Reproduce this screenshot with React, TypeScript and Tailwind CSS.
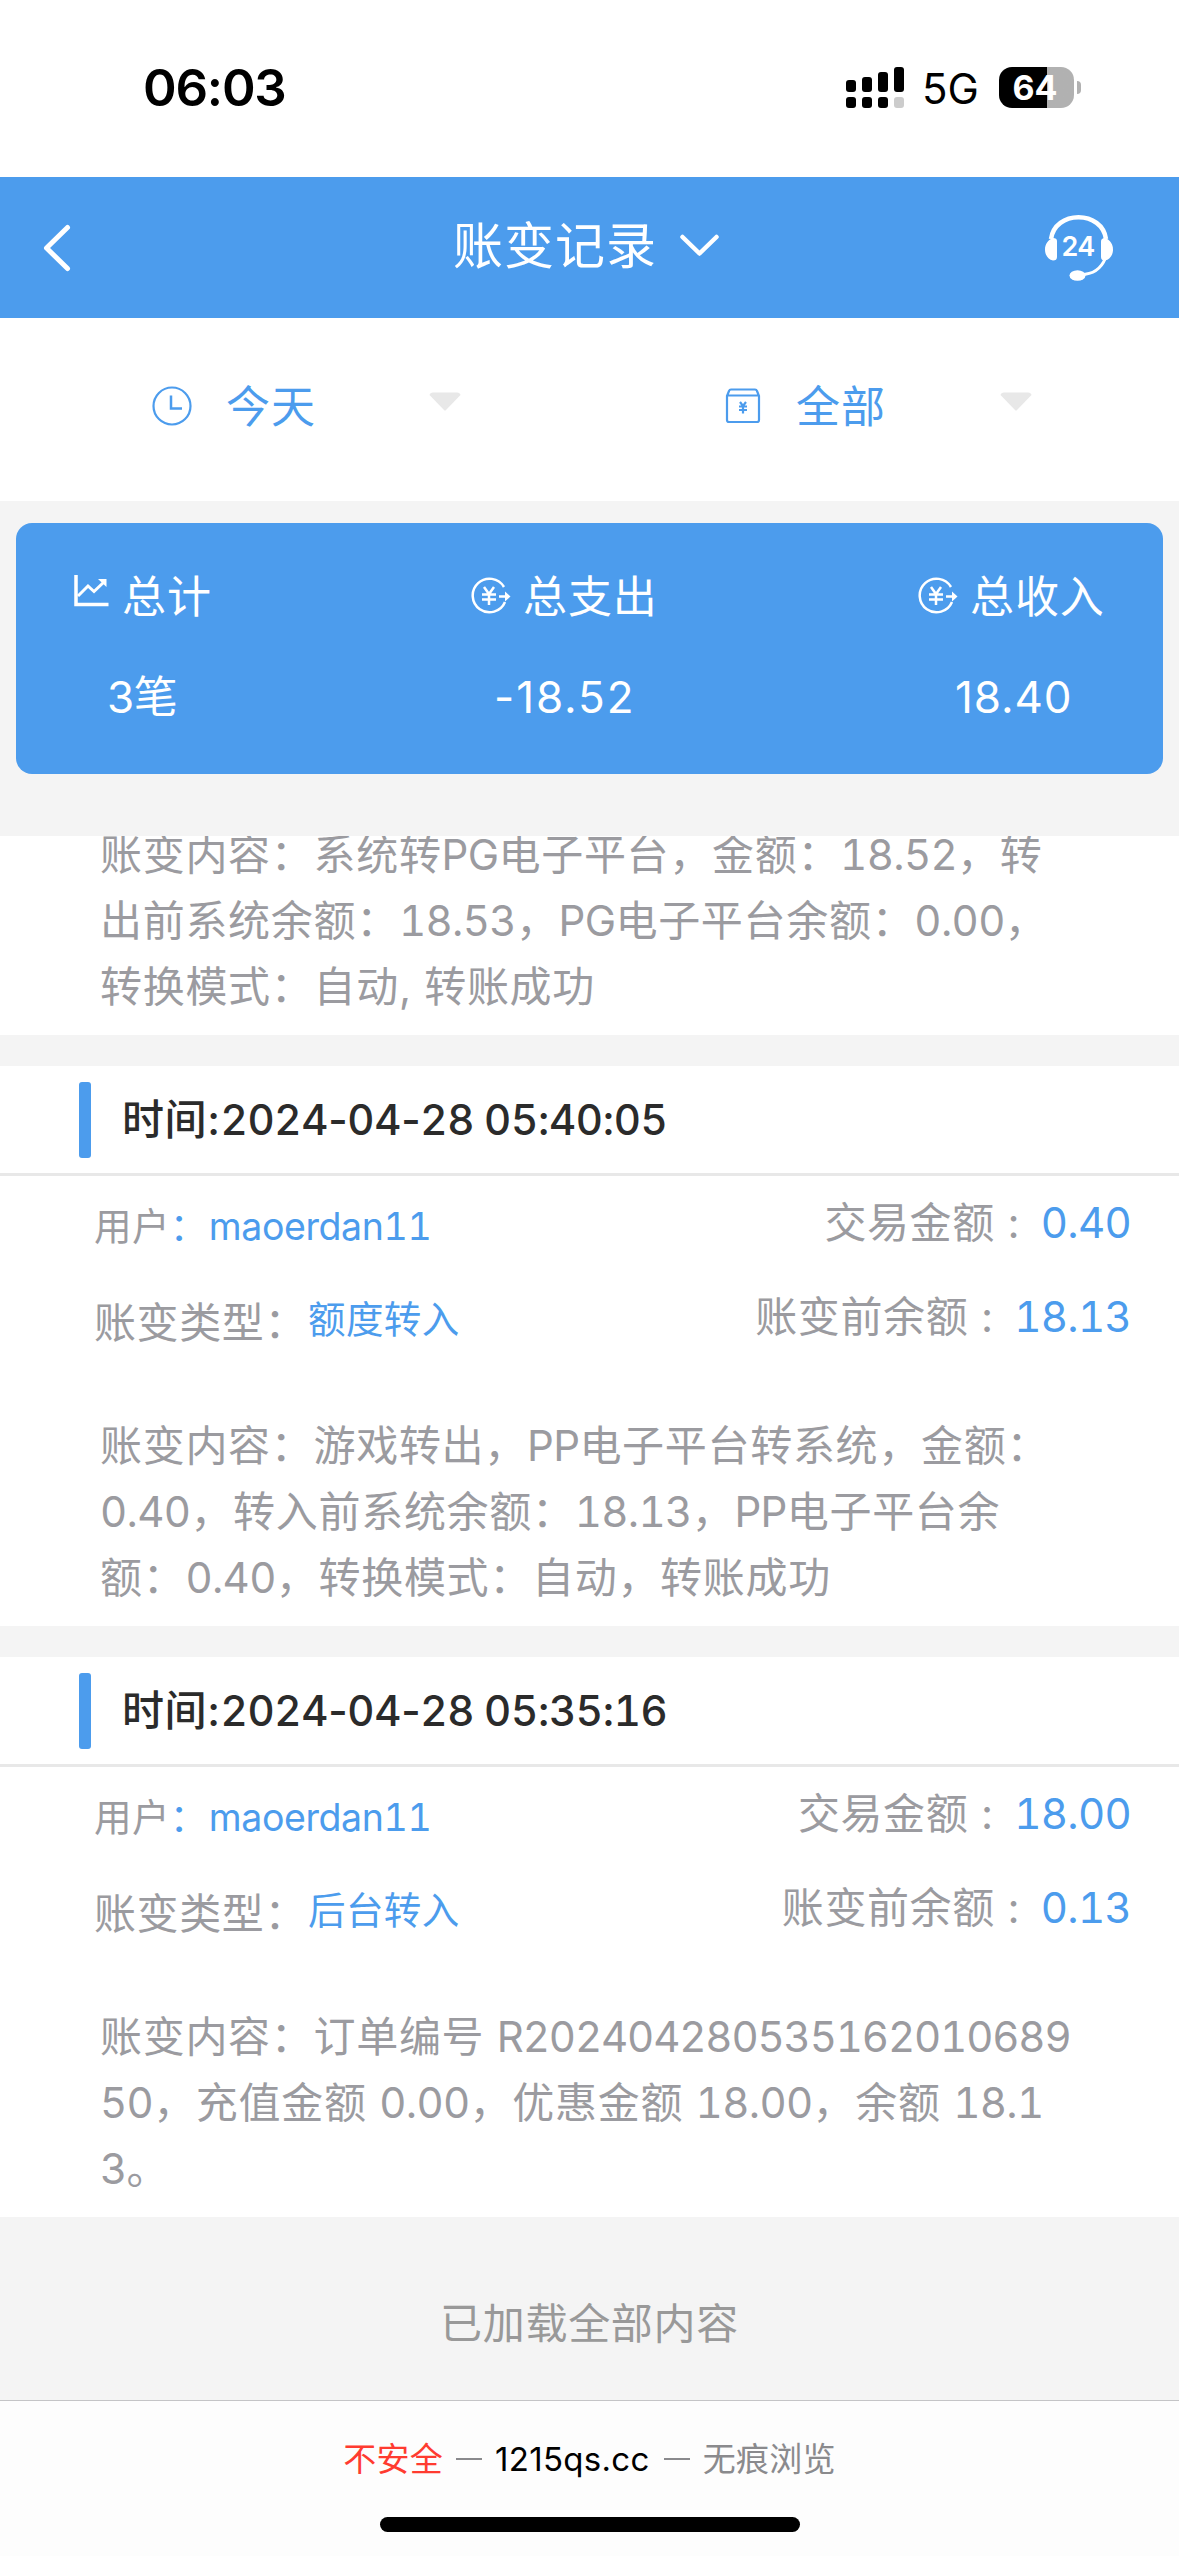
import React from 'react';

type ChangeRecord = {
  time: string;
  user: string;
  amount: string;
  type: string;
  before: string;
  lines: string[];
};

const records: ChangeRecord[] = [
  {
    time: '2024-04-28 05:40:05',
    user: 'maoerdan11',
    amount: '0.40',
    type: '额度转入',
    before: '18.13',
    lines: [
      '账变内容：游戏转出，PP电子平台转系统，金额：',
      '0.40，转入前系统余额：18.13，PP电子平台余',
      '额：0.40，转换模式：自动，转账成功',
    ],
  },
  {
    time: '2024-04-28 05:35:16',
    user: 'maoerdan11',
    amount: '18.00',
    type: '后台转入',
    before: '0.13',
    lines: [
      '账变内容：订单编号 R202404280535162010689',
      '50，充值金额 0.00，优惠金额 18.00，余额 18.1',
      '3。',
    ],
  },
];

function StatusBar() {
  return (
    <div className="flex h-[177px] shrink-0 items-start bg-white pt-[64px] text-black">
      <div className="ml-[143px] h-12 w-[703px] text-[51px] leading-[48px] font-semibold tracking-[-1.2px]">06:03</div>
      <svg className="mt-[3px] h-[41px] w-[58px]" viewBox="0 0 58 41">
        <rect x="0" y="13" width="10" height="12" rx="3" />
        <rect x="16" y="10" width="10" height="15" rx="3" />
        <rect x="32" y="5" width="10" height="20" rx="3" />
        <rect x="48" y="0" width="10" height="25" rx="3" />
        <rect x="0" y="30" width="10" height="11" rx="3" />
        <rect x="16" y="30" width="10" height="11" rx="3" />
        <rect x="32" y="30" width="10" height="11" rx="3" />
        <rect x="48" y="30" width="10" height="11" rx="3" fill="#ccc" />
      </svg>
      <div className="mt-[1px] ml-[18px] w-[77px] text-[42px] leading-[48px]">5G</div>
      <div className="mt-[3px] flex items-center">
        <div className="flex h-[41px] w-[75px] items-center justify-center overflow-hidden rounded-[13px] bg-linear-to-r from-black from-64% to-[#b1b1b1] to-64% pr-[3px] text-[34px] leading-none font-bold text-white">
          64
        </div>
        <div className="ml-[3px] h-[13px] w-1 rounded-r-full bg-[#b1b1b1]" />
      </div>
    </div>
  );
}

function NavBar() {
  return (
    <div className="flex h-[141px] shrink-0 items-start bg-[#4c9ced] text-white">
      <svg className="mt-[44px] ml-[39px] h-[54px] w-[34px]" viewBox="0 0 34 54" fill="none" stroke="currentColor" strokeWidth="5" strokeLinecap="round" strokeLinejoin="round">
        <path d="M28.500 6.500L7.500 27L28.500 47.500" />
      </svg>
      <div className="mt-[39px] ml-[380px] w-[227px] text-[50px] leading-[60px] tracking-[1px]">账变记录</div>
      <svg className="mt-[55px] h-[28px] w-[40px]" viewBox="0 0 40 28" fill="none" stroke="currentColor" strokeWidth="4.500" strokeLinecap="round" strokeLinejoin="round">
        <path d="M2.500 5L19.500 21.500L36.500 5" />
      </svg>
      <svg className="mt-[36px] ml-[323px] h-[70px] w-[72px]" viewBox="0 0 72 70" fill="none" stroke="currentColor">
        <path d="M8 26C10 12 22 4.300 35.500 4.300S61 12 63 26" strokeWidth="4.500" />
        <path d="M62.500 45C58 56 50 61.500 38 61.500" strokeWidth="3" />
        <path d="M14 26.500V44Q14 47.500 10 47.500C5 46.500 2 42 2 36.500S5 27 10 25Q14 25 14 28Z" fill="currentColor" stroke="none" />
        <path d="M58 28.500Q58 25 62 25C67 27 70 31 70 36.500S67 46.500 62 47.500Q58 47.500 58 44Z" fill="currentColor" stroke="none" />
        <ellipse cx="34.500" cy="62.500" rx="8" ry="5.300" fill="currentColor" stroke="none" />
        <text x="35" y="42.500" textAnchor="middle" fontSize="27" fontWeight="600" letterSpacing="-0.8" fill="currentColor" stroke="none">24</text>
      </svg>
    </div>
  );
}

function Triangle() {
  return (
    <svg className="mb-[10px] h-[19px] w-[32px]" viewBox="0 0 32 19" fill="#e8e8e8">
      <path d="M4 0.500H28Q31 0.500 31.500 3L17 18Q16 19 15 18L0.500 3Q1 0.500 4 0.500Z" />
    </svg>
  );
}

function Filters() {
  return (
    <div className="flex h-[183px] shrink-0 items-center bg-white text-[44px] leading-[56px] tracking-[0.9px] text-[#4c9ced]">
      <div className="flex w-[571px] items-center pb-[6px] pl-[152px]">
        <svg className="mb-[2px] h-[40px] w-[40px]" viewBox="0 0 40 40" fill="none" stroke="currentColor" strokeWidth="2.200">
          <circle cx="20" cy="20" r="18.500" />
          <path d="M19 9.500V22.500H30" strokeWidth="2.500" />
        </svg>
        <div className="ml-[34px] w-[203px]">今天</div>
        <Triangle />
      </div>
      <div className="flex items-center pb-[6px] pl-[154px]">
        <svg className="mb-[2px] h-[36px] w-[36px]" viewBox="0 0 36 36" fill="none" stroke="currentColor" strokeWidth="2.200">
          <path d="M2 8L4 3Q4.500 1.500 6 1.500H30Q31.500 1.500 32 3L34 8V32Q34 34 32 34H4Q2 34 2 32ZM2 7.500H34" />
          <path d="M15 14L18 18L21 14M14 18.500H22M14 22H22M18 18V25.500" />
        </svg>
        <div className="ml-[35px] w-[204px]">全部</div>
        <Triangle />
      </div>
    </div>
  );
}

function ChartIcon() {
  return (
    <svg className="mt-[10px] h-[32px] w-[36px]" viewBox="0 0 36 32" fill="none" stroke="currentColor" strokeWidth="3">
      <path d="M2 0V29.500H34.500" strokeWidth="3.500" />
      <path d="M4 21L14 11L20 16.500L30 7" />
      <path d="M24 4H32.500V12Z" fill="currentColor" stroke="none" />
    </svg>
  );
}

function YuanFlowIcon() {
  return (
    <svg className="mt-[12px] h-[37px] w-[40px]" viewBox="0 0 40 37" fill="none" stroke="currentColor" strokeWidth="2.500">
      <path d="M33 10A16.800 16.800 0 1 0 34 25" />
      <path d="M13 10L18 17L23 10M11 17.500H25M11 22.500H25M18 17V28" />
      <path d="M28 19.500H36" />
      <path d="M34 14.500L39.500 19.500L34 24.500Z" fill="currentColor" stroke="none" />
    </svg>
  );
}

function Summary() {
  return (
    <div className="h-[335px] shrink-0 px-4 pt-[22px]">
      <div className="flex h-[251px] rounded-2xl bg-[#4c9ced] text-[44px] leading-[56px] tracking-[0.9px] whitespace-nowrap text-white">
        <div className="mt-[42px] ml-[58px] w-[397px]">
          <div className="flex">
            <ChartIcon />
            <div className="mt-[4px] ml-[12px]">总计</div>
          </div>
          <div className="mt-[44px] ml-[33px] tracking-[-0.5px]">3笔</div>
        </div>
        <div className="mt-[42px] w-[447px]">
          <div className="flex">
            <YuanFlowIcon />
            <div className="mt-[4px] ml-[12px]">总支出</div>
          </div>
          <div className="mt-[44px] ml-[23px] tracking-[1.9px]">-18.52</div>
        </div>
        <div className="mt-[42px]">
          <div className="flex">
            <YuanFlowIcon />
            <div className="mt-[4px] ml-[12px]">总收入</div>
          </div>
          <div className="mt-[44px] ml-[37px] tracking-[0.9px]">18.40</div>
        </div>
      </div>
    </div>
  );
}

/* Latin runs and digits are set tighter than the Chinese text around them. */
function MixedLine({ text }: { text: string }) {
  const runs = text.split(/([A-Z0-9.]+)/).filter(Boolean);
  return (
    <div>
      {runs.map((run, i) =>
        /^[A-Z0-9.]+$/.test(run) ? (
          <span key={i} className={run.length > 8 ? 'tracking-[-1.15px] tabular-nums' : 'tracking-[-0.65px] tabular-nums'}>
            {run}
          </span>
        ) : (
          <span key={i}>{run}</span>
        ),
      )}
    </div>
  );
}

function ContentLines({ lines }: { lines: string[] }) {
  return (
    <div className="pt-px pb-[15px] pl-[100px] text-[42px] leading-[66px] tracking-[0.7px] whitespace-pre text-[#9b9ba0]">
      {lines.map((line) => (
        <MixedLine key={line} text={line} />
      ))}
    </div>
  );
}

function AmountRow({ label, value }: { label: string; value: string }) {
  return (
    <div className="flex h-12 justify-end leading-[48px]">
      <span>{label}</span>
      <span className="mr-2 w-[38px] text-center">:</span>
      <span className="tracking-[-0.7px] text-[#4c9ced] tabular-nums">{value}</span>
    </div>
  );
}

function RecordTime({ time }: { time: string }) {
  return (
    <span className="tracking-[-0.3px] [word-spacing:-1px]">
      {time.split(/(-)/).map((part, i) => (
        <span key={i} className={part === '-' ? '' : 'tabular-nums'}>
          {part}
        </span>
      ))}
    </span>
  );
}

function RecordCard({ record }: { record: ChangeRecord }) {
  return (
    <div className="mt-[31px] shrink-0 bg-white">
      <div className="flex h-[110px] border-b-[3px] border-[#e8e8e8] pl-[79px]">
        <div className="mt-4 h-[76px] w-3 rounded-[3px] bg-[#4c9ced]" />
        <div className="mt-[26px] ml-[31px] text-[42px] leading-[56px] font-medium tracking-[0.6px] text-[#2b2b2b]">
          时间:
          <RecordTime time={record.time} />
        </div>
      </div>
      <div className="flex h-[236px] justify-between pr-[48px] pl-[94px] text-[42px] tracking-[0.6px] whitespace-nowrap text-[#9b9ba0]">
        <div className="flex flex-col gap-12 pt-[27px]">
          <div className="flex h-12 text-[37.500px] leading-[48px] tracking-[0.4px]">
            <span>用户</span>
            <span className="w-[39px] text-[#4c9ced]">：</span>
            <span className="tracking-[-0.4px] text-[#4c9ced] tabular-nums">{record.user}</span>
          </div>
          <div className="flex h-12 leading-[48px]">
            <span className="w-[214px]">账变类型：</span>
            <span className="-mt-[3px] text-[37.500px] tracking-[0.4px] text-[#4c9ced]">{record.type}</span>
          </div>
        </div>
        <div className="flex flex-col gap-[46px] pt-[23px]">
          <AmountRow label="交易金额" value={record.amount} />
          <AmountRow label="账变前余额" value={record.before} />
        </div>
      </div>
      <ContentLines lines={record.lines} />
    </div>
  );
}

export default function App() {
  return (
    <div className="flex h-[2556px] w-[1179px] flex-col overflow-hidden bg-[#f4f4f4] font-[Inter,'Noto_Sans_CJK_SC',sans-serif]">
      <StatusBar />
      <NavBar />
      <Filters />
      <Summary />
      <div className="h-[199px] shrink-0 overflow-hidden bg-white">
        <div className="-mt-[15px]">
          <ContentLines
            lines={[
              '账变内容：系统转PG电子平台，金额：18.52，转',
              '出前系统余额：18.53，PG电子平台余额：0.00，',
              '转换模式：自动, 转账成功',
            ]}
          />
        </div>
      </div>
      {records.map((record) => (
        <RecordCard key={record.time} record={record} />
      ))}
      <div className="flex h-[183px] shrink-0 items-center justify-center pt-[30px] text-[42px] leading-[60px] tracking-[0.7px] text-[#999]">
        已加载全部内容
      </div>
      <div className="flex grow flex-col items-center border-t border-[#c4c4c6] bg-[#fdfdfd] pt-[34px]">
        <div className="flex h-12 items-center text-[33px] leading-[48px] tracking-[0.3px] whitespace-nowrap text-[#8a8a8d]">
          <span className="text-[#ff3b30]">不安全</span>
          <span className="mr-[13px] ml-[13px] h-[2.500px] w-[26px] bg-current" />
          <span className="text-black">1215qs.cc</span>
          <span className="mr-[13px] ml-[14px] h-[2.500px] w-[26px] bg-current" />
          <span>无痕浏览</span>
        </div>
        <div className="mt-[34px] h-[15px] w-[420px] rounded-full bg-black" />
      </div>
    </div>
  );
}
